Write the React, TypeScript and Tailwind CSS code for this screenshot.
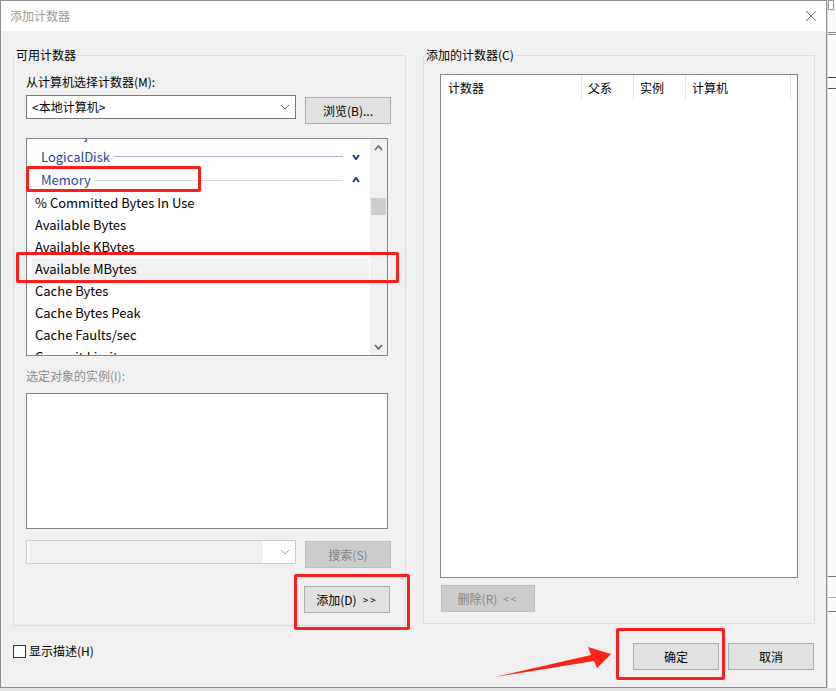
import React from 'react';

type Row =
  | { kind: 'cat'; label: string; open: boolean }
  | { kind: 'item'; label: string; selected?: boolean };

const rows: Row[] = [
  { kind: 'cat', label: 'Job Object Details', open: false },
  { kind: 'cat', label: 'LogicalDisk', open: false },
  { kind: 'cat', label: 'Memory', open: true },
  { kind: 'item', label: '% Committed Bytes In Use' },
  { kind: 'item', label: 'Available Bytes' },
  { kind: 'item', label: 'Available KBytes' },
  { kind: 'item', label: 'Available MBytes', selected: true },
  { kind: 'item', label: 'Cache Bytes' },
  { kind: 'item', label: 'Cache Bytes Peak' },
  { kind: 'item', label: 'Cache Faults/sec' },
  { kind: 'item', label: 'Commit Limit' },
];

function Chevron({ up, color, w = 8, h = 6, sw = 2 }: { up?: boolean; color: string; w?: number; h?: number; sw?: number }) {
  const pts = up ? `1,${h - 1} ${w / 2},1 ${w - 1},${h - 1}` : `1,1 ${w / 2},${h - 1} ${w - 1},1`;
  return (
    <svg width={w} height={h} viewBox={`0 0 ${w} ${h}`} className="shrink-0">
      <polyline points={pts} fill="none" stroke={color} strokeWidth={sw} />
    </svg>
  );
}

function Combo({ text, disabled }: { text?: string; disabled?: boolean }) {
  return (
    <div
      className={`w-[270px] h-[24px] flex items-center border bg-white ${
        disabled ? 'border-[#cccccc]' : 'border-[#7a7a7a]'
      }`}
    >
      <div className={`flex-1 h-full flex items-center pl-[5px] ${disabled ? 'm-[2px] mr-[16px] bg-[#f0f0f0]' : ''}`}>
        {text && <span className="text-[12px] leading-[16px] text-black">{text}</span>}
      </div>
      <div className="w-[16px] flex justify-center pr-[4px]">
        <Chevron color={disabled ? '#a0a0a0' : '#606060'} w={10} h={6} sw={1} />
      </div>
    </div>
  );
}

function Button({ children, disabled, className = '' }: { children: React.ReactNode; disabled?: boolean; className?: string }) {
  return (
    <div
      className={`h-[27px] flex items-center justify-center border text-[12px] leading-[16px] ${
        disabled ? 'bg-[#cccccc] border-[#bfbfbf] text-[#838383]' : 'bg-[#e1e1e1] border-[#adadad] text-black'
      } ${className}`}
    >
      {children}
    </div>
  );
}

function GroupLabel({ children }: { children: React.ReactNode }) {
  return (
    <span className="absolute left-[1px] -top-[9px] px-[1px] bg-[#f0f0f0] text-[12px] leading-[16px] text-black">
      {children}
    </span>
  );
}

function CounterList() {
  return (
    <div className="mt-[14px] w-[362px] h-[218px] border border-[#828790] bg-white flex overflow-hidden">
      <div className="flex-1 overflow-hidden">
        <div className="-mt-[17px] ml-[5px] mr-[1px]">
          {rows.map((r) =>
            r.kind === 'cat' ? (
              <div
                key={r.label}
                className={`flex items-center pl-[9px] pr-[9px] ${r.open ? 'h-[24px]' : 'h-[23px]'}`}
              >
                <span className="text-[13px] leading-[16px] text-[#1f44a6]">{r.label}</span>
                <div className={`flex-1 h-px ml-[4px] mr-[9px] ${r.open ? 'bg-[#d3dbea]' : 'bg-[#aab3c7]'}`} />
                <Chevron up={r.open} color="#1a3a8f" />
              </div>
            ) : (
              <div
                key={r.label}
                className={`h-[22px] flex items-center pl-[3px] ${r.selected ? 'bg-[#f0f0f0]' : ''}`}
              >
                <span className="text-[13px] leading-[16px] text-black">{r.label}</span>
              </div>
            )
          )}
        </div>
      </div>
      <div className="w-[17px] bg-[#f0f0f0] flex flex-col items-center">
        <div className="h-[17px] flex items-center justify-center">
          <Chevron up color="#606060" w={9} h={6} sw={1.6} />
        </div>
        <div className="mt-[42px] w-[15px] h-[17px] bg-[#cdcdcd]" />
        <div className="flex-1" />
        <div className="h-[17px] flex items-center justify-center">
          <Chevron color="#606060" w={9} h={6} sw={1.6} />
        </div>
      </div>
    </div>
  );
}

export default function App() {
  return (
    <div className="relative w-[836px] h-[691px] overflow-hidden bg-[#e9e9e9] font-['Noto_Sans_CJK_SC','Noto_Sans',sans-serif]">
      <div className="flex h-[688px]">
        {/* dialog */}
        <div className="w-[827px] h-[688px] border border-[#8f8f8f] bg-[#f0f0f0] flex flex-col">
          <div className="h-[30px] bg-white flex items-center justify-between pl-[9px] pr-[9px]">
            <span className="text-[12px] leading-[16px] text-[#9a9a9a]">添加计数器</span>
            <svg width="12" height="12" viewBox="0 0 12 12">
              <path d="M1 1 L11 11 M11 1 L1 11" stroke="#7a7a7a" strokeWidth="1" fill="none" />
            </svg>
          </div>

          <div className="flex items-start pl-[12px] pt-[24px] gap-[17px]">
            {/* left group */}
            <div className="relative w-[393px] h-[571px] border border-[#dcdcdc]">
              <GroupLabel>可用计数器</GroupLabel>
              <div className="pl-[12px] pt-[18px] flex flex-col">
                <div className="text-[12px] leading-[16px] text-black">从计算机选择计数器(M):</div>
                <div className="mt-[5px] flex items-start">
                  <Combo text="<本地计算机>" />
                  <Button className="ml-[9px] mt-[2px] w-[86px] h-[26px]">浏览(B)...</Button>
                </div>
                <CounterList />
                <div className="mt-[12px] text-[12px] leading-[16px] text-[#8c8c8c]">选定对象的实例(I):</div>
                <div className="mt-[9px] w-[362px] h-[136px] border border-[#828790] bg-white" />
                <div className="mt-[11px] flex items-start">
                  <Combo disabled />
                  <Button disabled className="ml-[9px] mt-[1px] w-[86px]">搜索(S)</Button>
                </div>
                <div className="mt-[18px] w-[364px] flex justify-end">
                  <Button className="w-[86px]">
                    添加(D)<span className="ml-[6px] text-[10px] tracking-[2px]">&gt;&gt;</span>
                  </Button>
                </div>
              </div>
            </div>

            {/* right group */}
            <div className="relative w-[392px] h-[569px] border border-[#dcdcdc]">
              <GroupLabel>添加的计数器(C)</GroupLabel>
              <div className="pl-[16px] pt-[18px] flex flex-col">
                <div className="w-[358px] h-[504px] border border-[#828790] bg-white">
                  <div className="h-[25px] flex text-[12px] leading-[16px] text-black">
                    <div className="w-[141px] pl-[7px] pt-[5px] border-r border-[#e5e5e5]">计数器</div>
                    <div className="w-[52px] pl-[6px] pt-[5px] border-r border-[#e5e5e5]">父系</div>
                    <div className="w-[52px] pl-[6px] pt-[5px] border-r border-[#e5e5e5]">实例</div>
                    <div className="w-[105px] pl-[6px] pt-[5px] border-r border-[#e5e5e5]">计算机</div>
                  </div>
                </div>
                <Button disabled className="mt-[7px] ml-[1px] w-[94px]">
                  删除(R)<span className="ml-[6px] text-[10px] tracking-[2px]">&lt;&lt;</span>
                </Button>
              </div>
            </div>
          </div>

          <div className="mt-[17px] flex items-start justify-between pl-[12px] pr-[12px]">
            <div className="flex items-center">
              <div className="w-[13px] h-[13px] border border-[#333333] bg-white" />
              <span className="ml-[3px] text-[12px] leading-[16px] text-black">显示描述(H)</span>
            </div>
            <div className="flex gap-[9px]">
              <Button className="w-[86px]">确定</Button>
              <Button className="w-[86px]">取消</Button>
            </div>
          </div>
        </div>

        {/* background window strip */}
        <div className="flex-1 bg-[#fafafa] flex flex-col border-l border-[#d8d8d8]">
          <div className="h-[10px] w-[6px] border border-[#999999] bg-white" />
          <div className="mt-[22px] h-[3px] border-y border-[#8a8a8a]" />
          <div className="mt-[42px] h-px bg-[#444444]" />
          <div className="mt-[10px] h-px bg-[#555555]" />
          <div className="mt-[487px] h-px bg-[#777777]" />
          <div className="mt-[20px] h-px bg-[#aaaaaa]" />
          <div className="mt-[13px] h-px bg-[#777777]" />
        </div>
      </div>
      <div className="h-[3px] bg-[#e3e3e3]" />

      {/* annotations */}
      <div className="absolute left-[26px] top-[166px] w-[175px] h-[26px] border-[3px] border-[#ff1e1e] rounded-[2px]" />
      <div className="absolute left-[16px] top-[252px] w-[383px] h-[31px] border-[3px] border-[#ff1e1e] rounded-[2px]" />
      <div className="absolute left-[294px] top-[574px] w-[116px] h-[56px] border-[3px] border-[#ff1e1e] rounded-[2px]" />
      <div className="absolute left-[616px] top-[628px] w-[109px] h-[52px] border-[3px] border-[#ff1e1e] rounded-[2px]" />
      <svg className="absolute left-0 top-0 pointer-events-none" width="836" height="691" viewBox="0 0 836 691">
        <polygon points="495,677 591,655 588,647 611,654 597,668 594,661" fill="#ff2418" />
      </svg>
    </div>
  );
}
